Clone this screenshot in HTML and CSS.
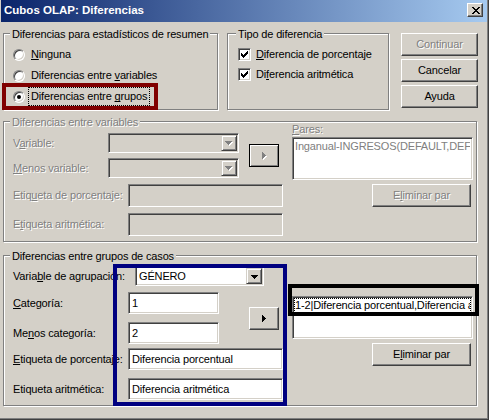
FILE: index.html
```html
<!DOCTYPE html>
<html lang="es">
<head>
<meta charset="utf-8">
<title>Cubos OLAP: Diferencias</title>
<link rel="stylesheet" href="styles.css">
</head>
<body>
<div class="window">
  <div class="titlebar">
    <span class="title">Cubos OLAP: Diferencias</span>
    <span class="close-btn">
      <svg width="8" height="7" viewBox="0 0 8 7" shape-rendering="crispEdges"><path d="M0 0h2v1h1v1h2V1h1V0h2v1H7v1H6v1H5v1h1v1h1v1h1v1H6V6H5V5H3v1H2v1H0V6h1V5h1V4h1V3H2V2H1V1H0z" fill="#000"/></svg>
    </span>
  </div>

  <div class="top-row">
    <div class="group g1">
      <span class="legend">Diferencias para estadísticos de resumen</span>
      <div class="radio-row"><span class="radio"></span><span class="opt"><u>N</u>inguna</span></div>
      <div class="radio-row"><span class="radio"></span><span class="opt">Diferencias entre <u>v</u>ariables</span></div>
      <div class="radio-row"><span class="radio checked"></span><span class="opt focus">Diferencias entre <u>g</u>rupos</span></div>
    </div>
    <div class="group g2">
      <span class="legend legend-g2">Tipo de diferencia</span>
      <div class="check-row"><span class="check"><svg width="7" height="7" viewBox="0 0 7 7" shape-rendering="crispEdges"><path d="M6 0h1v3H6v1H5v1H4v1H3v1H2V6H1V5H0V2h1v1h1v1h1V3h1V2h1V1h1z" fill="#000"/></svg></span><span class="chk-label"><u>D</u>iferencia de porcentaje</span></div>
      <div class="check-row"><span class="check"><svg width="7" height="7" viewBox="0 0 7 7" shape-rendering="crispEdges"><path d="M6 0h1v3H6v1H5v1H4v1H3v1H2V6H1V5H0V2h1v1h1v1h1V3h1V2h1V1h1z" fill="#000"/></svg></span><span class="chk-label">Di<u>f</u>erencia aritmética</span></div>
    </div>
    <div class="btn-col">
      <div class="btn main-btn disabled">Continuar</div>
      <div class="btn main-btn">Cancelar</div>
      <div class="btn main-btn">Ayuda</div>
    </div>
  </div>

  <div class="group g3">
    <span class="legend disabled-text">Diferencias entre variables</span>
    <div class="inner">
      <div class="left-block lb3">
        <div class="pair">
          <div class="pair-col gap5">
            <div class="frow">
              <span class="lbl w95 disabled-text">V<u>a</u>riable:</span>
              <div class="combo off w131"><span class="combo-text"></span><span class="drop"><svg width="8" height="5" viewBox="0 0 8 5" shape-rendering="crispEdges"><path d="M1 1h7v1H7v1H6v1H5v1H4V4H3V3H2V2H1z" fill="#fff"/><path d="M0 0h7v1H6v1H5v1H4v1H3V3H2V2H1V1H0z" fill="#808080"/></svg></span></div>
            </div>
            <div class="frow">
              <span class="lbl w95 disabled-text"><u>M</u>enos variable:</span>
              <div class="combo off w131"><span class="combo-text"></span><span class="drop"><svg width="8" height="5" viewBox="0 0 8 5" shape-rendering="crispEdges"><path d="M1 1h7v1H7v1H6v1H5v1H4V4H3V3H2V2H1z" fill="#fff"/><path d="M0 0h7v1H6v1H5v1H4v1H3V3H2V2H1V1H0z" fill="#808080"/></svg></span></div>
            </div>
          </div>
          <div class="btn arrow-btn default-frame ml10"><svg width="5" height="8" viewBox="0 0 5 8" shape-rendering="crispEdges"><path d="M1 1v7h1V7h1V6h1V5h1V4H4V3H3V2H2V1z" fill="#fff"/><path d="M0 0v7h1V6h1V5h1V4h1V3H3V2H2V1H1V0z" fill="#808080"/></svg></div>
        </div>
        <div class="frow mt6">
          <span class="lbl w115 disabled-text">Etiq<u>u</u>eta de porcentaje:</span>
          <div class="field off w155 h23"></div>
        </div>
        <div class="frow mt6">
          <span class="lbl w115 disabled-text">E<u>t</u>iqueta aritmética:</span>
          <div class="field off w155 h23"></div>
        </div>
      </div>
      <div class="right-block rb3">
        <div class="pares-lbl disabled-text"><u>P</u>ares:</div>
        <div class="listbox"><div class="item gray">Inganual-INGRESOS(DEFAULT,DEFAULT)</div></div>
        <div class="btn elim disabled">E<u>l</u>iminar par</div>
      </div>
    </div>
  </div>

  <div class="group g4">
    <span class="legend">Diferencias entre grupos de casos</span>
    <div class="inner">
      <div class="left-block lb4">
        <div class="frow">
          <span class="lbl w122">Varia<u>b</u>le de agrupación:</span>
          <div class="combo w129"><span class="combo-text">GÉNERO</span><span class="drop"><svg width="7" height="4" viewBox="0 0 7 4" shape-rendering="crispEdges"><path d="M0 0h7v1H6v1H5v1H4v1H3V3H2V2H1V1H0z" fill="#000"/></svg></span></div>
        </div>
        <div class="pair mt6">
          <div class="pair-col gap8">
            <div class="frow">
              <span class="lbl w115"><u>C</u>ategoría:</span>
              <div class="field w91 h22">1</div>
            </div>
            <div class="frow">
              <span class="lbl w115">Me<u>n</u>os categoría:</span>
              <div class="field w91 h22">2</div>
            </div>
          </div>
          <div class="btn arrow-btn ml30"><svg width="4" height="7" viewBox="0 0 4 7" shape-rendering="crispEdges"><path d="M0 0v7h1V6h1V5h1V4h1V3H3V2H2V1H1V0z" fill="#000"/></svg></div>
        </div>
        <div class="frow mt4">
          <span class="lbl w115"><u>E</u>tiqueta de porcentaje:</span>
          <div class="field w155 h22">Diferencia porcentual</div>
        </div>
        <div class="frow mt8">
          <span class="lbl w115">Etiqueta aritmética:</span>
          <div class="field w155 h22">Diferencia aritmética</div>
        </div>
      </div>
      <div class="right-block rb4">
        <div class="listbox"><div class="item focus-item">1-2|Diferencia porcentual,Diferencia aritmética</div></div>
        <div class="btn elim">E<u>l</u>iminar par</div>
      </div>
    </div>
  </div>

  <div class="mark mark-red"></div>
  <div class="mark mark-blue"></div>
  <div class="mark mark-black"></div>
</div>
</body>
</html>
```

FILE: styles.css
```css
* { box-sizing: border-box; }

body {
  margin: 0;
  background: #d4d0c8;
  font-family: "Liberation Sans", Arial, sans-serif;
  font-size: 11px;
  letter-spacing: -0.15px;
  color: #000;
}

u { text-decoration-skip-ink: none; }

.window {
  position: relative;
  width: 489px;
  height: 420px;
  background: #d4d0c8;
  border-right: 1px solid #404040;
  border-bottom: 1px solid #404040;
  box-shadow: inset -1px -1px 0 #808080;
  padding: 0 1px 0 1px;
  overflow: hidden;
}

/* title bar */
.titlebar {
  height: 22px;
  display: flex;
  justify-content: space-between;
  align-items: flex-start;
  background: linear-gradient(to right, #0a246a, #a6caf0);
}
.title {
  color: #fff;
  font-weight: bold;
  font-size: 11.5px;
  letter-spacing: 0;
  line-height: 20px;
  padding-left: 3px;
  white-space: nowrap;
}
.close-btn {
  width: 16px;
  height: 14px;
  margin: 3px 4px 0 0;
  display: flex;
  align-items: center;
  justify-content: center;
  background: #d4d0c8;
  border: 1px solid;
  border-color: #fff #404040 #404040 #fff;
  box-shadow: inset -1px -1px 0 #808080;
  padding-left: 1px;
}
.close-btn svg { display: block; }

/* group boxes */
.group {
  position: relative;
  border: 1px solid #808080;
  box-shadow: inset 1px 1px 0 #fff, 1px 1px 0 #fff;
}
.legend {
  position: absolute;
  top: -6px;
  left: 6px;
  padding: 0 2px;
  line-height: 13px;
  background: #d4d0c8;
  white-space: nowrap;
}
.legend-g2 { left: 8px; }

.disabled-text {
  color: #808080;
  text-shadow: 1px 1px 0 #fff;
}

.top-row {
  display: flex;
  align-items: flex-start;
  margin: 11px 0 0 2px;
}

.g1 {
  width: 215px;
  height: 77px;
  padding: 10px 0 0 9px;
}
.g2 {
  width: 162px;
  height: 77px;
  margin-left: 9px;
  padding: 10px 0 0 10px;
}
.btn-col {
  margin-left: 12px;
  display: flex;
  flex-direction: column;
  gap: 3px;
}

/* radios */
.radio-row {
  display: flex;
  align-items: center;
  height: 21px;
}
.radio {
  width: 12px;
  height: 12px;
  flex: none;
  border-radius: 50%;
  background: #fff;
  border: 1px solid;
  border-color: #808080 #fff #fff #808080;
  box-shadow: inset 1px 1px 0 #404040, inset -1px -1px 0 #d4d0c8;
  display: flex;
  align-items: center;
  justify-content: center;
}
.radio.checked::after {
  content: "";
  width: 4px;
  height: 4px;
  border-radius: 50%;
  background: #000;
}
.opt {
  margin-left: 3px;
  padding: 2px 2px;
  border: 1px dotted transparent;
  line-height: 13px;
  white-space: nowrap;
}
.opt.focus { border-color: #000; }

/* checkboxes */
.check-row {
  display: flex;
  align-items: center;
  height: 20px;
}
.check {
  width: 13px;
  height: 13px;
  flex: none;
  background: #fff;
  border: 1px solid;
  border-color: #808080 #fff #fff #808080;
  box-shadow: inset 1px 1px 0 #404040, inset -1px -1px 0 #d4d0c8;
  display: flex;
  align-items: center;
  justify-content: center;
}
.check svg { display: block; }
.chk-label {
  margin-left: 5px;
  line-height: 13px;
  white-space: nowrap;
}

/* buttons */
.btn {
  display: flex;
  align-items: center;
  justify-content: center;
  background: #d4d0c8;
  border: 1px solid;
  border-color: #fff #404040 #404040 #fff;
  box-shadow: inset -1px -1px 0 #808080;
  white-space: nowrap;
  line-height: 13px;
}
.btn.disabled {
  color: #808080;
  text-shadow: 1px 1px 0 #fff;
}
.main-btn {
  width: 77px;
  height: 23px;
}
.arrow-btn {
  width: 30px;
  height: 23px;
  flex: none;
}
.arrow-btn svg { display: block; }
.default-frame {
  border-color: #000;
  box-shadow: inset 1px 1px 0 #fff, inset -1px -1px 0 #808080;
}
.elim {
  width: 99px;
  height: 23px;
  margin: 4px 0 0 80px;
}

/* group 3 & 4 */
.g3 {
  width: 474px;
  height: 121px;
  margin: 11px 0 0 2px;
}
.g4 {
  width: 474px;
  height: 151px;
  margin: 13px 0 0 2px;
}
.inner {
  display: flex;
  align-items: flex-start;
}
.left-block {
  width: 280px;
  flex: none;
  padding-left: 9px;
}
.lb3 { padding-top: 11px; }
.lb4 { padding-top: 10px; }
.right-block {
  width: 183px;
  flex: none;
  margin-left: 8px;
}
.rb3 { padding-top: 1px; }
.rb4 { padding-top: 39px; }

.pair {
  display: flex;
  align-items: center;
}
.pair-col {
  display: flex;
  flex-direction: column;
}
.gap5 { gap: 5px; }
.gap8 { gap: 8px; }
.ml10 { margin-left: 10px; }
.ml30 { margin-left: 30px; }
.mt4 { margin-top: 4px; }
.mt6 { margin-top: 6px; }
.mt8 { margin-top: 8px; }

.frow {
  display: flex;
  align-items: center;
}
.lbl {
  flex: none;
  white-space: nowrap;
  line-height: 13px;
}
.w95 { width: 95px; }
.w115 { width: 115px; }
.w122 { width: 122px; }

/* sunken controls */
.combo, .field, .listbox {
  background: #fff;
  border: 1px solid;
  border-color: #808080 #fff #fff #808080;
  box-shadow: inset 1px 1px 0 #404040, inset -1px -1px 0 #d4d0c8;
}
.combo {
  height: 20px;
  display: flex;
  align-items: stretch;
  padding: 1px;
  flex: none;
}
.combo.off, .field.off { background: #d4d0c8; }
.w131 { width: 131px; }
.w129 { width: 129px; }
.w91 { width: 91px; }
.w155 { width: 155px; }
.h22 { height: 22px; }
.h23 { height: 23px; }
.combo-text {
  flex: 1;
  padding-left: 2px;
  line-height: 16px;
  white-space: nowrap;
}
.drop {
  width: 16px;
  flex: none;
  display: flex;
  align-items: center;
  justify-content: center;
  background: #d4d0c8;
  border: 1px solid;
  border-color: #d4d0c8 #404040 #404040 #d4d0c8;
  box-shadow: inset 1px 1px 0 #fff, inset -1px -1px 0 #808080;
  padding-top: 1px;
}
.drop svg { display: block; }

.field {
  flex: none;
  padding: 0 3px;
  display: flex;
  align-items: center;
  line-height: 13px;
  white-space: nowrap;
  overflow: hidden;
}

.pares-lbl {
  line-height: 13px;
}
.listbox {
  width: 181px;
  height: 43px;
  margin-top: 1px;
  padding: 1px;
  overflow: hidden;
}
.item {
  border: 1px dotted transparent;
  padding-left: 0;
  line-height: 13px;
  white-space: nowrap;
  overflow: hidden;
}
.item.gray { color: #808080; }
.item.focus-item { border-color: #000; }

/* annotation frames drawn over the dialog */
.mark {
  position: absolute;
  border: 4px solid;
  pointer-events: none;
}
.mark-red {
  left: 2px;
  top: 83px;
  width: 156px;
  height: 27px;
  border-color: #800000;
}
.mark-blue {
  left: 113px;
  top: 264px;
  width: 174px;
  height: 142px;
  border-color: #000080;
}
.mark-black {
  left: 288px;
  top: 284px;
  width: 191px;
  height: 32px;
  border-color: #000;
}
```
